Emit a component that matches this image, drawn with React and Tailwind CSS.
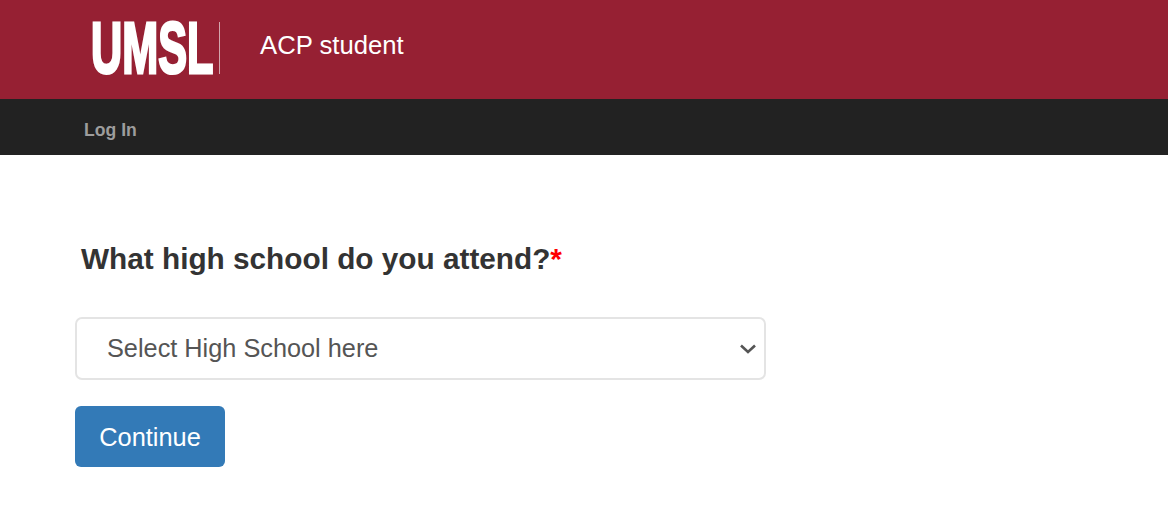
const App = () => {
  return (
    <div className="min-h-[507px] bg-white font-['Liberation_Sans',Arial,sans-serif]">
      <header className="h-[99px] bg-[#962033] flex items-center pl-[91px]">
        <div className="w-[122px] h-[54px] mt-[-4px] flex items-center">
          <span className="inline-block origin-left scale-x-[0.6] whitespace-nowrap text-[72px] leading-none font-bold text-white [-webkit-text-stroke:3px_white]">
            UMSL
          </span>
        </div>
        <div className="w-px h-[52px] mt-[-4px] ml-[6px] bg-[#d3a6ad]" />
        <span className="ml-[40px] mt-[-7px] text-[25.7px] leading-none text-white">ACP student</span>
      </header>
      <nav className="h-[56px] bg-[#222222] flex items-center pl-[84px] pt-[6px]">
        <a className="text-[17.6px] font-bold text-[#9d9d9d]">Log In</a>
      </nav>
      <main className="pl-[75px]">
        <h2 className="pt-[86px] pl-[6px] text-[29.75px] leading-[36px] font-bold text-[#333333]">
          What high school do you attend?<span className="text-[#ff0000]">*</span>
        </h2>
        <div className="mt-[40px] w-[691px] h-[63px] rounded-[7px] border-2 border-[#e4e4e4] bg-white flex items-center justify-between pl-[30px] pr-[7px]">
          <span className="pt-[1px] text-[25.3px] text-[#555555]">Select High School here</span>
          <svg width="18" height="12" viewBox="0 0 18 12" fill="none" stroke="#555555" strokeWidth="2.6">
            <path d="M2 2.5 L9 9 L16 2.5" />
          </svg>
        </div>
        <button className="mt-[26px] block w-[150px] h-[61px] pt-[1px] rounded-[6px] bg-[#337ab7] text-[25.4px] text-white">
          Continue
        </button>
      </main>
    </div>
  );
};

export default App;
